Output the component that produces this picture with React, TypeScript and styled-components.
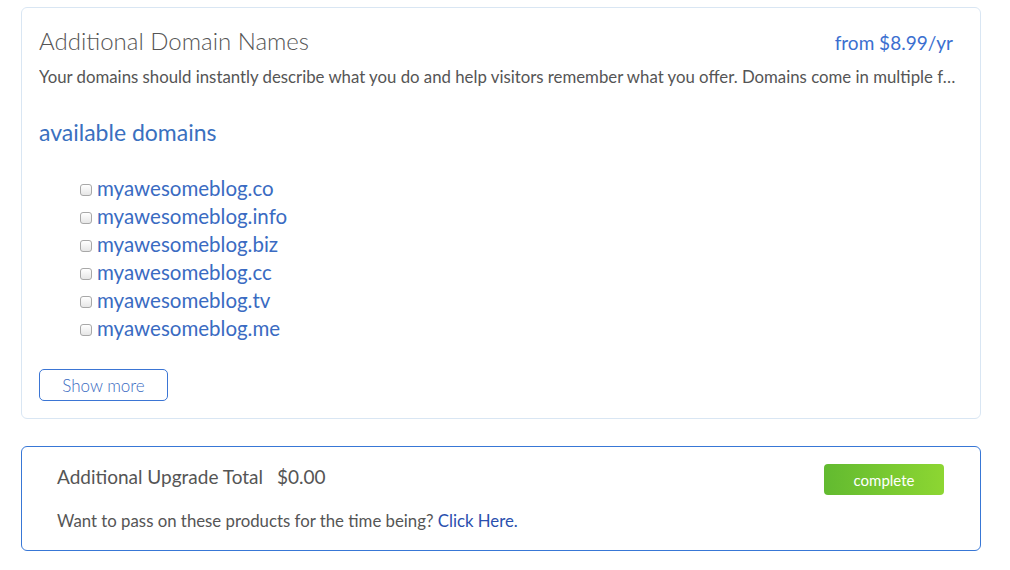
import styled, { createGlobalStyle } from 'styled-components';

const GlobalStyle = createGlobalStyle`
  body {
    margin: 0;
    background: #ffffff;
    font-family: Lato, "Open Sans", sans-serif;
    color: #555555;
  }
`;

const Page = styled.main`
  width: 960px;
  padding: 7px 0 0 21px;
  display: flex;
  flex-direction: column;
  gap: 27px;
`;

const Card = styled.section<{ $accent?: boolean }>`
  border: 1px solid ${(p) => (p.$accent ? '#3877d6' : '#d9e6f3')};
  border-radius: 6px;
  background: #fff;
`;

const DomainCard = styled(Card)`
  padding: 18px 18px 17px 17px;
  height: 412px;
  box-sizing: border-box;
`;

const HeadRow = styled.div`
  display: flex;
  justify-content: space-between;
  align-items: baseline;
  padding-right: 9px;
`;

const Title = styled.h2`
  margin: 0;
  font-weight: 300;
  font-size: 24px;
  line-height: 30px;
  color: #555;
`;

const Price = styled.span`
  font-size: 19px;
  color: #3b6fd0;
`;

const Desc = styled.p`
  margin: 9px 0 0;
  font-size: 16.8px;
  line-height: 24px;
  white-space: nowrap;
  overflow: hidden;
  text-overflow: ellipsis;
  color: #555;
`;

const SubTitle = styled.h3`
  margin: 28px 0 0;
  font-weight: 400;
  font-size: 23px;
  line-height: 30px;
  color: #3a70bf;
`;

const List = styled.ul`
  list-style: none;
  margin: 27px 0 0;
  padding: 0 0 0 40px;
  display: flex;
  flex-direction: column;
`;

const Item = styled.li`
  display: flex;
  align-items: center;
  height: 28px;
`;

const Box = styled.input`
  appearance: none;
  width: 12px;
  height: 12px;
  margin: 3px 5px 0 1px;
  border: 1px solid #a8a8a8;
  border-radius: 3px;
  background: linear-gradient(#ffffff, #e6e6e6);
`;

const Domain = styled.label`
  font-size: 20.5px;
  color: #3a6bc2;
`;

const MoreButton = styled.button`
  margin-top: 27px;
  width: 129px;
  height: 32px;
  border: 1px solid #3b75d4;
  border-radius: 5px;
  background: #fff;
  color: #3a6bc2;
  font-family: inherit;
  font-weight: 300;
  font-size: 17px;
`;

const TotalCard = styled(Card)`
  padding: 15px 36px 18px 35px;
  height: 105px;
  box-sizing: border-box;
`;

const TotalRow = styled.div`
  display: flex;
  justify-content: space-between;
  align-items: flex-start;
`;

const Total = styled.div`
  font-size: 19px;
  line-height: 30px;
  color: #555;
  display: flex;
  gap: 14px;
`;

const Complete = styled.button`
  width: 120px;
  height: 31px;
  margin-top: 2px;
  border: none;
  border-radius: 4px;
  background: linear-gradient(90deg, #62ba30, #8dd632);
  color: #fff;
  font-family: inherit;
  font-size: 15px;
`;

const Pass = styled.p`
  margin: 15px 0 0;
  font-size: 16.8px;
  color: #555;
`;

const Link = styled.a`
  color: #2a4fae;
  text-decoration: none;
`;

const domains = ['co', 'info', 'biz', 'cc', 'tv', 'me'];

export default function App() {
  return (
    <>
      <GlobalStyle />
      <Page>
        <DomainCard>
          <HeadRow>
            <Title>Additional Domain Names</Title>
            <Price>from $8.99/yr</Price>
          </HeadRow>
          <Desc>
            Your domains should instantly describe what you do and help visitors remember what you offer. Domains come in multiple f…
          </Desc>
          <SubTitle>available domains</SubTitle>
          <List>
            {domains.map((d) => (
              <Item key={d}>
                <Box type="checkbox" id={d} />
                <Domain htmlFor={d}>myawesomeblog.{d}</Domain>
              </Item>
            ))}
          </List>
          <MoreButton>Show more</MoreButton>
        </DomainCard>
        <TotalCard $accent>
          <TotalRow>
            <Total>
              <span>Additional Upgrade Total</span>
              <span>$0.00</span>
            </Total>
            <Complete>complete</Complete>
          </TotalRow>
          <Pass>
            Want to pass on these products for the time being? <Link href="#">Click Here.</Link>
          </Pass>
        </TotalCard>
      </Page>
    </>
  );
}
